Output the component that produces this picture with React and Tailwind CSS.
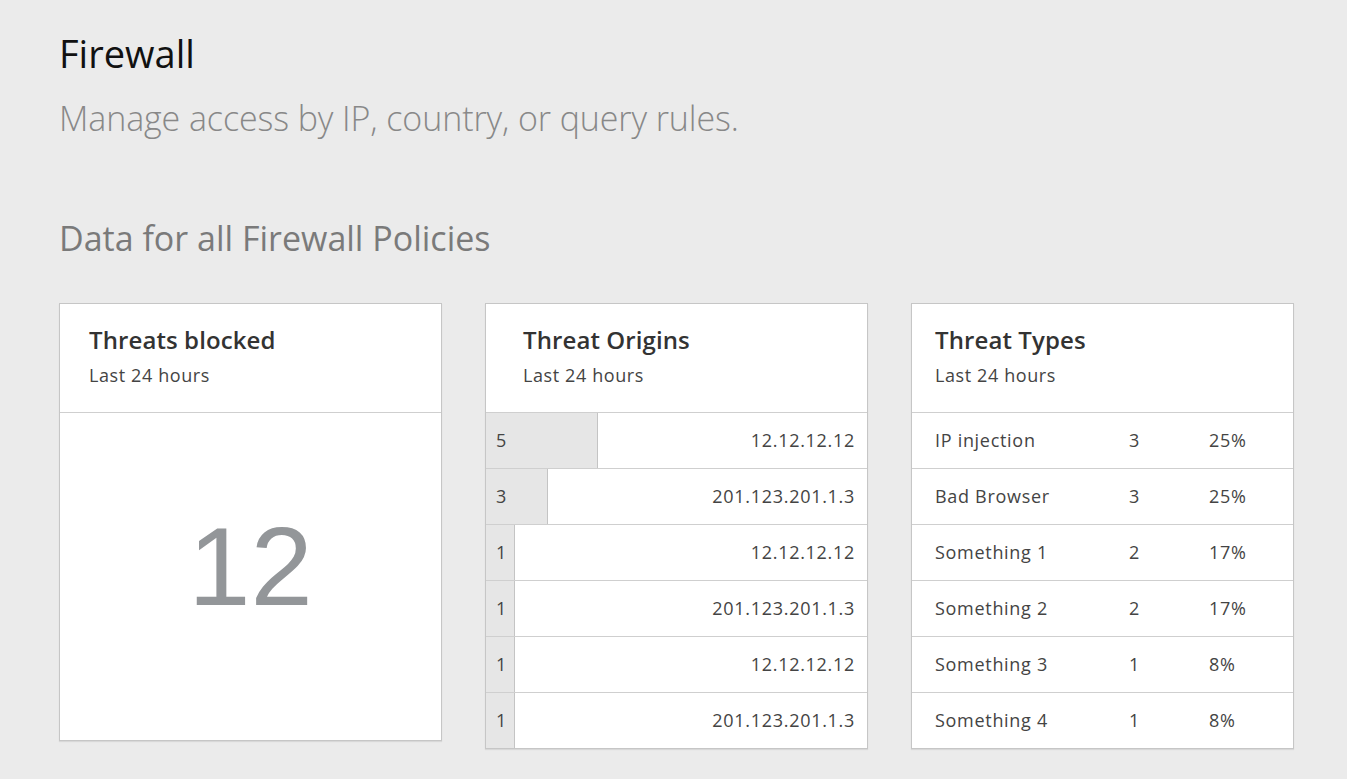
const origins = [
  { n: 5, ip: "12.12.12.12", w: "w-[112px]" },
  { n: 3, ip: "201.123.201.1.3", w: "w-[62px]" },
  { n: 1, ip: "12.12.12.12", w: "w-[29px]" },
  { n: 1, ip: "201.123.201.1.3", w: "w-[29px]" },
  { n: 1, ip: "12.12.12.12", w: "w-[29px]" },
  { n: 1, ip: "201.123.201.1.3", w: "w-[29px]" },
];

const types = [
  { name: "IP injection", n: 3, pct: "25%" },
  { name: "Bad Browser", n: 3, pct: "25%" },
  { name: "Something 1", n: 2, pct: "17%" },
  { name: "Something 2", n: 2, pct: "17%" },
  { name: "Something 3", n: 1, pct: "8%" },
  { name: "Something 4", n: 1, pct: "8%" },
];

function CardHeader({ title, pad }) {
  return (
    <div className={`h-[108px] pt-[21px] ${pad}`}>
      <h3 className="text-[24px] leading-[30px] font-semibold text-[#333] tracking-[0.1px]">{title}</h3>
      <p className="mt-[8px] text-[18px] leading-[24px] text-[#444] tracking-[0.6px]">Last 24 hours</p>
    </div>
  );
}

export default function App() {
  return (
    <div
      className="min-h-[777px] bg-[#ebebeb] pl-[59px] pt-[30px] pb-[30px]"
      style={{ fontFamily: '"Open Sans", "Liberation Sans", sans-serif' }}
    >
      <h1 className="text-[38px] leading-[46px] text-[#111]">Firewall</h1>
      <p className="mt-[22px] text-[34px] leading-[40px] font-light text-[#888] tracking-[-0.1px]">
        Manage access by IP, country, or query rules.
      </p>
      <h2 className="mt-[79px] text-[34px] leading-[42px] text-[#7a7a7a]">Data for all Firewall Policies</h2>

      <div className="mt-[44px] flex items-start gap-[43px]">
        {/* Threats blocked */}
        <div className="w-[383px] shrink-0 bg-white border border-[#c6c6c6] shadow-[0_1px_1px_rgba(0,0,0,0.08)]">
          <CardHeader title="Threats blocked" pad="px-[29px]" />
          <div className="h-[328px] border-t border-[#cfcfcf] pt-[98px] text-center">
            <span
              className="text-[112px] leading-none text-[#939699]"
              style={{ fontFamily: '"Liberation Sans", Arial, sans-serif' }}
            >
              12
            </span>
          </div>
        </div>

        {/* Threat Origins */}
        <div className="w-[383px] shrink-0 bg-white border border-[#c6c6c6] shadow-[0_1px_1px_rgba(0,0,0,0.08)]">
          <CardHeader title="Threat Origins" pad="px-[37px]" />
          {origins.map((o, i) => (
            <div key={i} className="h-[56px] flex border-t border-[#cfcfcf] text-[18px] tracking-[0.7px] text-[#444]">
              <div className={`${o.w} shrink-0 bg-[#e6e6e6] border-r border-[#c4c4c4] pl-[10px] flex items-center`}>
                {o.n}
              </div>
              <div className="flex-1 flex items-center justify-end pr-[12px]">{o.ip}</div>
            </div>
          ))}
        </div>

        {/* Threat Types */}
        <div className="w-[383px] shrink-0 bg-white border border-[#c6c6c6] shadow-[0_1px_1px_rgba(0,0,0,0.08)]">
          <CardHeader title="Threat Types" pad="px-[23px]" />
          {types.map((t, i) => (
            <div key={i} className="h-[56px] flex items-center border-t border-[#cfcfcf] pl-[23px] text-[18px] tracking-[0.7px] text-[#444]">
              <span className="w-[194px]">{t.name}</span>
              <span className="w-[80px]">{t.n}</span>
              <span>{t.pct}</span>
            </div>
          ))}
        </div>
      </div>
    </div>
  );
}
